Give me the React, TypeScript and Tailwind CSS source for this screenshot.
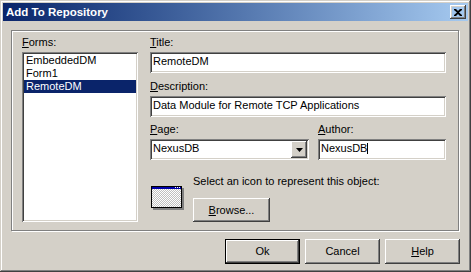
import React from "react";

const sunken =
  "shadow-[inset_1px_1px_0_#808080,inset_-1px_-1px_0_#ffffff,inset_2px_2px_0_#404040,inset_-2px_-2px_0_#d4d0c8]";
const raised =
  "shadow-[inset_-1px_-1px_0_#404040,inset_1px_1px_0_#ffffff,inset_-2px_-2px_0_#808080,inset_2px_2px_0_#d4d0c8]";

function Label({ u, rest, className = "" }: { u: string; rest: string; className?: string }) {
  return (
    <div className={`h-[13px] leading-[13px] ${className}`}>
      <span className="underline decoration-1 underline-offset-[1px]">{u}</span>
      {rest}
    </div>
  );
}

function Edit({ value, w, caret }: { value: string; w: string; caret?: boolean }) {
  return (
    <div className={`h-[21px] ${w} bg-white ${sunken} pl-[3px] pt-[3px] flex items-start`}>
      <span className="leading-[13px] whitespace-nowrap">{value}</span>
      {caret && <span className="w-[1px] h-[11px] bg-black mt-[1px]" />}
    </div>
  );
}

function Button({
  children,
  w,
  def,
}: {
  children: React.ReactNode;
  w: string;
  def?: boolean;
}) {
  if (def) {
    return (
      <div className={`${w} h-[25px] border border-black flex`}>
        <div className={`flex-1 ${raised} flex items-center justify-center leading-[13px]`}>
          {children}
        </div>
      </div>
    );
  }
  return (
    <div className={`${w} h-[25px] ${raised} flex items-center justify-center leading-[13px]`}>
      {children}
    </div>
  );
}

function IconPic() {
  return (
    <svg width="33" height="24" viewBox="0 0 33 24" className="block">
      <defs>
        <pattern id="chk" width="2" height="2" patternUnits="userSpaceOnUse">
          <rect width="2" height="2" fill="#ffffff" />
          <rect width="1" height="1" fill="#c0c0c0" />
          <rect x="1" y="1" width="1" height="1" fill="#c0c0c0" />
        </pattern>
      </defs>
      <rect x="2" y="2" width="31" height="22" fill="#808080" />
      <rect x="0" y="0" width="31" height="22" fill="#000000" />
      <rect x="1" y="1" width="29" height="20" fill="url(#chk)" />
      <rect x="1" y="1" width="29" height="2" fill="#0000a8" />
      <rect x="24" y="1" width="1" height="1" fill="#ffffff" />
      <rect x="26" y="1" width="1" height="1" fill="#ffffff" />
      <rect x="28" y="1" width="1" height="1" fill="#ffffff" />
    </svg>
  );
}

export default function App() {
  return (
    <div
      className={`w-[471px] h-[272px] bg-[#d4d0c8] p-[3px] flex flex-col text-black text-[11px] leading-[13px] font-[family-name:'Liberation_Sans',Arial,sans-serif] shadow-[inset_-1px_-1px_0_#404040,inset_1px_1px_0_#d4d0c8,inset_-2px_-2px_0_#808080,inset_2px_2px_0_#ffffff]`}
    >
      {/* Title bar */}
      <div className="h-[18px] flex items-center justify-between bg-gradient-to-r from-[#0a246a] to-[#a6caf0] pl-[3px] pr-[2px]">
        <span className="text-white font-bold text-[11.5px] leading-[14px]">Add To Repository</span>
        <div className={`w-[16px] h-[14px] ${raised} flex items-center justify-center`}>
          <svg width="8" height="7" viewBox="0 0 8 7" className="block">
            <path d="M0 0h2l2 2 2-2h2v1L5 3.5 8 6v1H6L4 5 2 7H0V6l3-2.5L0 1z" fill="#000" />
          </svg>
        </div>
      </div>

      {/* Body */}
      <div className="pl-[8px] flex flex-col">
        {/* Group */}
        <div className="mt-[9px] w-[448px] h-[201px] border border-[#808080] shadow-[inset_1px_1px_0_#ffffff,1px_1px_0_#ffffff] pl-[10px] pt-[5px] flex">
          {/* Left column */}
          <div className="w-[116px] flex flex-col">
            <Label u="F" rest="orms:" />
            <div className={`mt-[3px] h-[170px] bg-white ${sunken} p-[2px] flex flex-col`}>
              <div className="h-[13px] leading-[13px] pl-[2px]">EmbeddedDM</div>
              <div className="h-[13px] leading-[13px] pl-[2px]">Form1</div>
              <div className="h-[13px] leading-[13px] pl-[2px] bg-[#0a246a] text-white">RemoteDM</div>
            </div>
          </div>

          {/* Right column */}
          <div className="ml-[12px] w-[296px] flex flex-col">
            <Label u="T" rest="itle:" />
            <div className="mt-[3px]">
              <Edit value="RemoteDM" w="w-[296px]" />
            </div>
            <Label u="D" rest="escription:" className="mt-[7px]" />
            <div className="mt-[3px]">
              <Edit value="Data Module for Remote TCP Applications" w="w-[296px]" />
            </div>
            <div className="mt-[6px] flex gap-[9px]">
              <div className="w-[159px] flex flex-col">
                <Label u="P" rest="age:" />
                <div className={`mt-[3px] h-[21px] bg-white ${sunken} p-[2px] flex`}>
                  <span className="flex-1 pl-[1px] pt-[1px] leading-[13px]">NexusDB</span>
                  <div className={`w-[16px] h-[17px] bg-[#d4d0c8] ${raised} flex items-center justify-center`}>
                    <svg width="7" height="4" viewBox="0 0 7 4" className="block">
                      <path d="M0 0h7L3.5 4z" fill="#000" />
                    </svg>
                  </div>
                </div>
              </div>
              <div className="w-[128px] flex flex-col">
                <Label u="A" rest="uthor:" />
                <div className="mt-[3px]">
                  <Edit value="NexusDB" w="w-[128px]" caret />
                </div>
              </div>
            </div>

            {/* Icon row */}
            <div className="mt-[15px] flex pl-[1px]">
              <div className="mt-[11px]">
                <IconPic />
              </div>
              <div className="ml-[9px] flex flex-col">
                <div className="leading-[13px] whitespace-nowrap">Select an icon to represent this object:</div>
                <div className="mt-[10px]">
                  <div className={`w-[77px] h-[24px] ${raised} flex items-center justify-center leading-[13px]`}>
                    <span>
                      <span className="underline decoration-1 underline-offset-[1px]">B</span>rowse...
                    </span>
                  </div>
                </div>
              </div>
            </div>
          </div>
        </div>

        {/* Buttons */}
        <div className="mt-[8px] w-[449px] flex justify-end gap-[5px]">
          <Button w="w-[75px]" def>
            Ok
          </Button>
          <Button w="w-[75px]">Cancel</Button>
          <Button w="w-[75px]">
            <span>
              <span className="underline decoration-1 underline-offset-[1px]">H</span>elp
            </span>
          </Button>
        </div>
      </div>
    </div>
  );
}
